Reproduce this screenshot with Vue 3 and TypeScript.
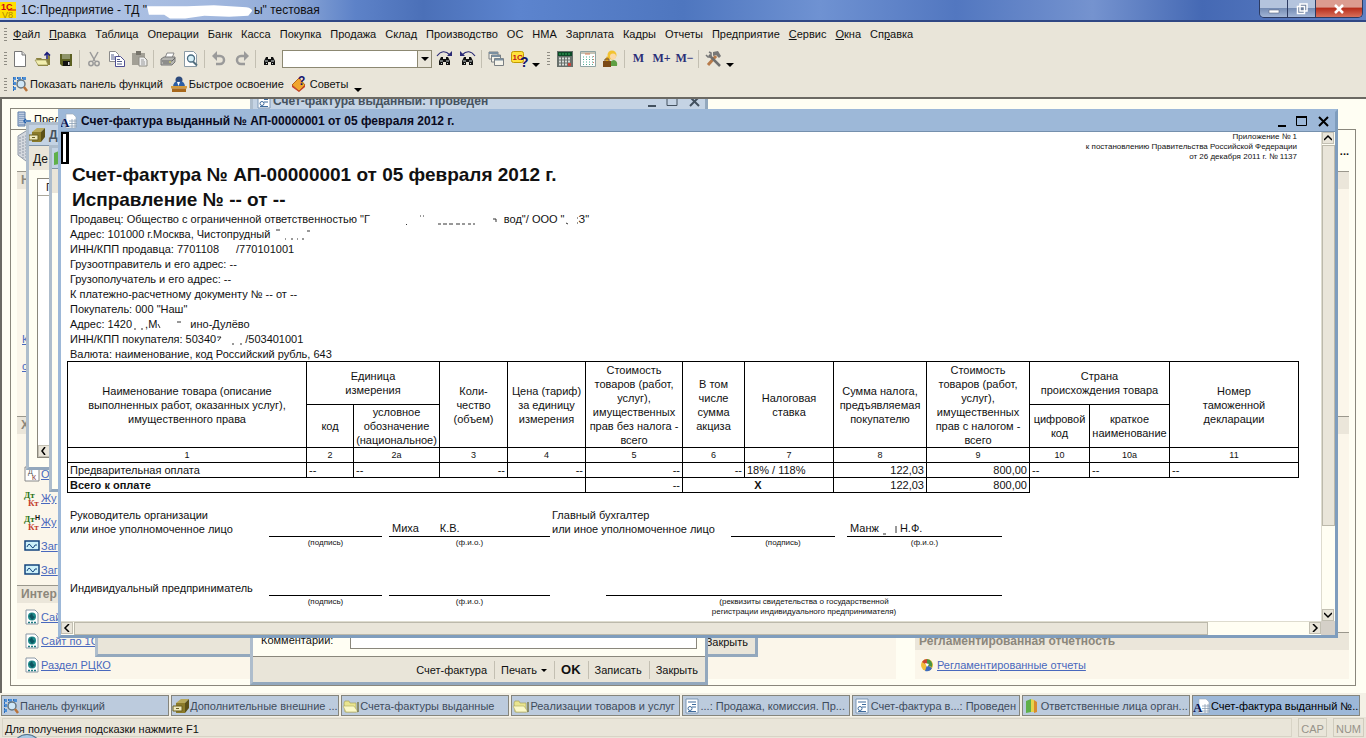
<script setup lang="ts">
import { ref } from 'vue'

const search = ref('')
const comment = ref('')

// Each menu title is split around its underlined access key.
const menu: [string, string, string][] = [
  ['', 'Ф', 'айл'], ['', 'П', 'равка'], ['Таблица', '', ''], ['Операции', '', ''], ['Банк', '', ''],
  ['Касса', '', ''], ['Покупка', '', ''], ['Продажа', '', ''], ['Склад', '', ''], ['Производство', '', ''],
  ['ОС', '', ''], ['НМА', '', ''], ['Зарплата', '', ''], ['Кадры', '', ''], ['Отчеты', '', ''],
  ['Предприятие', '', ''], ['', 'С', 'ервис'], ['', 'О', 'кна'], ['Сп', 'р', 'авка'],
]

const binoculars = '<path d="M2 14V10l2-4h2v2h3V6h2l2 4v4H9v-3H6v3z" fill="#111"/><path d="M3 10h3M9 10h3M4 12.500h1M10 12.500h1" stroke="#cfd8d8"/>'
const formIcon = '<path d="M2 1h12v14H2z" fill="#fff" stroke="#7d97b5"/><path d="M4 4h8M8 6.500h4M8 9h4" stroke="#3e6b9c"/><circle cx="6" cy="10.500" r="2" fill="none" stroke="#3e6b9c"/><path d="M4 13.500h8" stroke="#3e6b9c"/>'
const sheetA = '<path d="M5 1h7l3 3v11H5z" fill="#fff" stroke="#9aa7b5" stroke-width=".6"/><path d="M8 8h8M8 10.500h8M8 13h8M11 6v9M14 6v9" stroke="#8ba0b4" stroke-width=".8"/><text x="-1" y="14" font-family="Liberation Serif" font-weight="700" font-size="13" fill="#0a1350">A</text>'
const folder = '<path d="M1 5l1-2h4l1 2h6v9H2z" fill="#e9e58f" stroke="#a9a35a" stroke-width=".7"/><path d="M0 8h11l4 6H3z" fill="#fbf9c8" stroke="#b8b268" stroke-width=".7"/><path d="M15 4v10" stroke="#77774a" stroke-width="1.500"/>'
const cabinet = '<path d="M3 5l5-4h8l-4 4z" fill="#b8a95a"/><path d="M3 5h9v10H3z" fill="#8b7b2a"/><path d="M12 5l4-4v9l-4 5z" fill="#5c5118"/><path d="M0 8h9v5H0z" fill="#efe9bd" stroke="#6b6020"/><path d="M3 10.500h3" stroke="#6b6020"/>'
const lens = '<path d="M1 1h3v3H1zM6 1h3v3H6zM11 1h3v3h-3zM1 6h3v3H1zM1 11h3v3H1z" fill="#4d8fd6"/><path d="M1.500 1v14M5.500 1v4M10.500 1v3" stroke="#2d6cb8" stroke-dasharray="2 1"/><circle cx="9" cy="8" r="4" fill="#cfe7f7" stroke="#66757f" stroke-width="1.500"/><path d="M12 11l3 4" stroke="#b9733a" stroke-width="2.500"/>'
const page = '<path d="M2 1h9l3 3v11H2z" fill="#fff" stroke="#8a98a5"/><circle cx="8" cy="7.500" r="4" fill="#1f8a8a"/><path d="M5 7l3-3 1 3 2 1-3 3z" fill="#0c5560"/><path d="M4 13.500h8" stroke="#1f7a80" stroke-dasharray="2 1" stroke-width="1.500"/>'
const icons: Record<string, string> = {
  logo: '<path d="M0 0h16v16H0z" fill="#ffdf00"/><text x="1" y="8" font-family="Liberation Sans" font-weight="700" font-size="9" fill="#d00018">1С</text><path d="M8 8h8" stroke="#d00018"/><text x="2" y="16" font-family="Liberation Sans" font-size="9" fill="#b08a00">V8</text>',
  blank: '<path d="M2.500 .5h7.500l3.500 3.500v11.500h-11z" fill="#fff" stroke="#777"/><path d="M10 .5V4h3.500" fill="#ddd" stroke="#777"/>',
  open: '<path d="M1 7h5l1 1h6v7H3z" fill="#8b823f"/><path d="M0 9h11l2 5H3z" fill="#f2eeaf" stroke="#978f50" stroke-width=".7"/><path d="M14 14V4" stroke="#8a823e" stroke-width="2"/><path d="M12 8V2M9.500 4.500L12 1.500l3 3" fill="none" stroke="#17197a" stroke-width="1.500"/>',
  save: '<path d="M2 3h12v12H4l-2-2z" fill="#5c6022"/><path d="M4 3h8v5H4z" fill="#8f946a"/><path d="M5 10h7v5H5z" fill="#111"/><path d="M10 11h1.500v3H10z" fill="#ddd"/>',
  cut: '<g fill="none" stroke="#9a9a9a" stroke-width="1.500"><path d="M4 1l5 9M12 1L7 10"/><circle cx="5" cy="12.500" r="2.200"/><circle cx="11" cy="12.500" r="2.200"/></g>',
  copy: '<g fill="#fff"><path d="M.5 .5h6l3 3v7h-9z" stroke="#8a8a8a"/><path d="M6.500 5.500h5l4 4v6h-9z" stroke="#4d4d92"/></g><path d="M2 4h3M2 6h4M2 8h4M8 8.500h3M8 10.500h5M8 13h5" stroke="#555f8c"/>',
  paste: '<path d="M0 2h13v12H0z" fill="#a3a096"/><path d="M4 0h5v4H4z" fill="#77746b"/><path d="M7 6h5l3 3v6H7z" fill="#eee" stroke="#8e8c84"/><path d="M9 9h3M9 11h4M9 13h4" stroke="#999"/>',
  print: '<path d="M5 7l2-5h7l-2 5z" fill="#fff" stroke="#888"/><path d="M1 8l3-2h11v5l-3 3H1z" fill="#b4b4b0" stroke="#777"/><path d="M2 10h10l3-3M3 12h8" stroke="#666" fill="none"/><path d="M9 11h2" stroke="#e0e060"/>',
  preview: '<path d="M1.500 .5h9l3 3v12h-12z" fill="#fff" stroke="#8a9aa5"/><circle cx="8" cy="7.500" r="3.500" fill="#d7f0f8" stroke="#4a6b80" stroke-width="1.300"/><path d="M10 10.500l4 4" stroke="#54707f" stroke-width="2"/>',
  undo: '<path d="M4 5h5a4 4 0 010 8H5" fill="none" stroke="#9a9a9a" stroke-width="2.500"/><path d="M1 5l5-5v10z" fill="#9a9a9a"/>',
  redo: '<path d="M12 5H7a4 4 0 000 8h4" fill="none" stroke="#9a9a9a" stroke-width="2.500"/><path d="M15 5l-5-5v10z" fill="#9a9a9a"/>',
  find: binoculars,
  next: binoculars + '<path d="M0 5q6-8 13-1" fill="none" stroke="#2b2b75" stroke-width="1.200"/><path d="M15 0v5h-5z" fill="#2b2b75"/>',
  prev: binoculars + '<path d="M15 5Q9-3 2 4" fill="none" stroke="#2b2b75" stroke-width="1.200"/><path d="M0 0v5h5z" fill="#2b2b75"/>',
  windows: '<g fill="#f5f3ea" stroke="#7a7f83"><path d="M1 1h9v7H1z"/><path d="M3.500 4h9v7h-9z"/><path d="M6.500 7.500h9v7h-9z"/></g><path d="M1 2h9M4 5h8M7 8.500h8" stroke="#7a8fa0" stroke-width="2"/>',
  help: '<rect x=".5" y=".5" width="12" height="11" rx="2" fill="#ffe23c" stroke="#c29a00"/><text x="1.500" y="9" font-family="Liberation Sans" font-weight="700" font-size="8" fill="#c2151b">1С</text><text x="9" y="16" font-family="Liberation Sans" font-weight="700" font-size="14" fill="#11136b">?</text>',
  calc: '<path d="M0 0h16v16H0z" fill="#676f6b"/><path d="M1 1h14v4H1z" fill="#0c4a28"/><path d="M2 3h12" stroke="#38b060" stroke-dasharray="2 1"/><path d="M2 7.500h12M2 10.500h12M2 13.500h12" stroke="#d7dcd8" stroke-width="2" stroke-dasharray="2 1"/><path d="M11 12h3v3h-3z" fill="#c7463d"/>',
  calendar: '<path d="M.5 .5h15v15H.5z" fill="#fff" stroke="#8fa3a3"/><path d="M1 2h14" stroke="#c6c2b4" stroke-width="2"/><path d="M5 3h5" stroke="#d77a50"/><path d="M3 6h11M3 8.500h11M3 11h11M3 13.500h11" stroke="#4fae93" stroke-dasharray="1 2"/><path d="M13.500 5v9" stroke="#e37a6a" stroke-dasharray="1 2"/>',
  person: '<circle cx="9" cy="4" r="4.500" fill="#f2c230"/><circle cx="10" cy="5.500" r="3" fill="#fbd9a8"/><path d="M6 15q1-6 5-6 4 1 3 6z" fill="#5fa044"/><path d="M5 6q-2 3 0 5" fill="none" stroke="#e0a820" stroke-width="2.500"/><path d="M0 10h8v6H0z" fill="#7b4a16"/><path d="M2 10V8h4v2" fill="none" stroke="#7b4a16"/>',
  tools: '<path d="M3 14L11 5" stroke="#b77a4a" stroke-width="3"/><path d="M8 1l5-1 3 5-2 2-3-3-3 1z" fill="#777"/><path d="M4 4l11 11" stroke="#6f6f6f" stroke-width="2.500"/><path d="M1 4l2 2h3V2L4 1" fill="none" stroke="#777" stroke-width="1.600"/>',
  lens,
  master: '<circle cx="8" cy="4" r="3.500" fill="#2d4a7c"/><path d="M2 11q0-6 6-6t6 6z" fill="#2c5fa5"/><path d="M6 6h3l-1.500 4z" fill="#fff"/><path d="M0 10h16v2.500H0z" fill="#d39a3c"/><path d="M1 12.500h14V16H1z" fill="#a8681c"/>',
  tips: '<path d="M0 9l7-7 6 7-6 6z" fill="#f0a52c" stroke="#b5651a"/><path d="M0 9l7 6 6-6v2l-6 5-7-5z" fill="#c83c28"/><text x="6" y="9" font-family="Liberation Sans" font-weight="700" font-size="12" fill="#14146e">?</text>',
  form: formIcon, sheetA, folder, cabinet, page,
  book: '<path d="M2 3l5-2v13l-5 1z" fill="#5fb04a"/><path d="M7 1l3 1v12l-3 0z" fill="#e7d34a"/><path d="M10 2l3 2v10l-3 1z" fill="#d98b2f"/>',
  building: '<path d="M1 1h7v14H1z" fill="#bccbe0" stroke="#5c7ca8"/><path d="M3 3v11M5 3v11M7 3v11" stroke="#5c7ca8" stroke-dasharray="1 1"/><path d="M9 10h5M9 8l-2 2 2 2" stroke="#1f5fae" stroke-width="1.500" fill="none"/>',
  accounts: '<path d="M1 1h14v14H1z" fill="#fff" stroke="#888"/><text x="4" y="8" font-size="7" fill="#555">Д</text><text x="8" y="14" font-size="7" fill="#833">К</text>',
  wave: '<path d="M1 3h14v9H1z" fill="#cdf1fa" stroke="#14447e" stroke-width="1.500"/><path d="M3 9q2-5 4-1t4-1l2 0" fill="none" stroke="#14447e"/>',
  dtkt: '<text x="0" y="8" font-family="Liberation Serif" font-weight="700" font-size="9" fill="#2c7416">Дт</text><text x="4" y="16" font-family="Liberation Serif" font-weight="700" font-size="9" fill="#c4402e">Кт</text>',
  dtktn: '<text x="0" y="8" font-family="Liberation Serif" font-weight="700" font-size="9" fill="#2c7416">Дт</text><text x="11" y="6" font-family="Liberation Sans" font-weight="700" font-size="7" fill="#111">Н</text><text x="4" y="16" font-family="Liberation Serif" font-weight="700" font-size="9" fill="#c4402e">Кт</text>',
  pie: '<circle cx="8" cy="8" r="6" fill="#f0bd3a"/><path d="M8 8V2a6 6 0 015 8z" fill="#4a9440"/><path d="M8 8L3 5a6 6 0 015-3z" fill="#c8442f"/><path d="M8 8l5 3a6 6 0 01-7 3z" fill="#3d6cc0"/><path d="M6 6l4 1-2 3z" fill="#fff"/>',
}

type Tool = { icon?: string; text?: string; sep?: boolean; label?: string }
const sep: Tool = { sep: true }
const fileTools: Tool[] = [
  { icon: 'blank', label: 'Новый' }, { icon: 'open', label: 'Открыть' }, { icon: 'save', label: 'Сохранить' }, sep,
  { icon: 'cut', label: 'Вырезать' }, { icon: 'copy', label: 'Копировать' }, { icon: 'paste', label: 'Вставить' }, sep,
  { icon: 'print', label: 'Печать' }, { icon: 'preview', label: 'Просмотр' }, sep,
  { icon: 'undo', label: 'Отменить' }, { icon: 'redo', label: 'Вернуть' }, sep, { icon: 'find', label: 'Найти' },
]
const searchTools: Tool[] = [
  { icon: 'next', label: 'Найти далее' }, { icon: 'prev', label: 'Найти назад' }, sep,
  { icon: 'windows', label: 'Окна' }, { icon: 'help', label: 'Помощь' },
]
const calcTools: Tool[] = [
  { icon: 'calc', label: 'Калькулятор' }, { icon: 'calendar', label: 'Календарь' }, { icon: 'person', label: 'Пользователь' }, sep,
  { text: 'M' }, { text: 'M+' }, { text: 'M−' }, sep, { icon: 'tools', label: 'Настройка' },
]

const columns = [239, 47, 86, 68, 78, 97, 62, 89, 93, 103, 60, 80, 129]
const numbers = ['1', '2', '2а', '3', '4', '5', '6', '7', '8', '9', '10', '10а', '11']
const payment = ['Предварительная оплата', '--', '--', '--', '--', '--', '--', '18% / 118%', '122,03', '800,00', '--', '--', '--']
const rightAligned = [3, 4, 5, 6, 8, 9]

const links = [
  { icon: 'accounts', text: 'О' }, { icon: 'dtkt', text: 'Жу' }, { icon: 'dtktn', text: 'Жу' },
  { icon: 'wave', text: 'Заг' }, { icon: 'wave', text: 'Заг' },
]
const sites = ['Сай', 'Сайт по 1С', 'Раздел РЦКО']

const tasks = [
  { icon: 'lens', text: 'Панель функций' }, { icon: 'cabinet', text: 'Дополнительные внешние ...' },
  { icon: 'folder', text: 'Счета-фактуры выданные' }, { icon: 'folder', text: 'Реализации товаров и услуг' },
  { icon: 'form', text: '...: Продажа, комиссия. Пр...' }, { icon: 'form', text: 'Счет-фактура в...: Проведен' },
  { icon: 'book', text: 'Ответственные лица орган...' }, { icon: 'sheetA', text: 'Счет-фактура выданный №...' },
]
</script>

<template>
  <div class="app">
    <header class="caption">
      <svg class="ico" viewBox="0 0 16 16" v-html="icons.logo" />
      <h1>1С:Предприятие - ТД "<span class="blot"><svg viewBox="0 0 112 18"><path d="M0 5h42l28-1 34 2q6 1 6 4l-4 5-20 1-26-1-20 3-16 0-6-4H2z" fill="#fff" /></svg></span>ы" тестовая</h1>
      <div class="sysbuttons">
        <button aria-label="Свернуть"><svg viewBox="0 0 16 12"><path d="M3 7h10v3H3z" fill="#fff" stroke="#5a6a85" stroke-width=".6" /></svg></button>
        <button aria-label="Восстановить"><svg viewBox="0 0 16 12"><path d="M6 1h7v7h-7zM3.500 3.500h7v7h-7z" fill="#6c7f9c" stroke="#fff" stroke-width="1.500" /></svg></button>
        <button class="red" aria-label="Закрыть"><svg viewBox="0 0 16 12"><path d="M4 2l8 8M12 2l-8 8" stroke="#fff" stroke-width="2.500" /></svg></button>
      </div>
    </header>

    <nav class="menu">
      <i class="grip" />
      <button v-for="m in menu" :key="m.join('')">{{ m[0] }}<u>{{ m[1] }}</u>{{ m[2] }}</button>
    </nav>

    <div class="tools">
      <i class="grip" />
      <template v-for="(t, i) in fileTools" :key="i">
        <i v-if="t.sep" class="sep" />
        <button v-else class="tool" :aria-label="t.label"><svg class="ico" viewBox="0 0 16 16" v-html="icons[t.icon!]" /></button>
      </template>
      <div class="combo">
        <input v-model="search" type="text" aria-label="Поиск" />
        <button aria-label="Список"><i class="tri" /></button>
      </div>
      <template v-for="(t, i) in searchTools" :key="i">
        <i v-if="t.sep" class="sep" />
        <button v-else class="tool" :aria-label="t.label"><svg class="ico" viewBox="0 0 16 16" v-html="icons[t.icon!]" /></button>
      </template>
      <button class="more" aria-label="Ещё"><i class="tri" /></button>
      <i class="grip wide" />
      <template v-for="(t, i) in calcTools" :key="i">
        <i v-if="t.sep" class="sep" />
        <button v-else-if="t.text" class="tool mem">{{ t.text }}</button>
        <button v-else class="tool" :aria-label="t.label"><svg class="ico" viewBox="0 0 16 16" v-html="icons[t.icon!]" /></button>
      </template>
      <button class="more" aria-label="Ещё"><i class="tri" /></button>
    </div>

    <div class="tools quick">
      <i class="grip" />
      <button><svg class="ico" viewBox="0 0 16 16" v-html="icons.lens" />Показать панель функций</button>
      <button><svg class="ico" viewBox="0 0 16 16" v-html="icons.master" />Быстрое освоение</button>
      <button><svg class="ico" viewBox="0 0 16 16" v-html="icons.tips" />Советы</button>
      <button class="more" aria-label="Ещё"><i class="tri" /></button>
    </div>

    <main class="desktop">
      <section class="panel">
        <div class="tab"><svg class="ico" viewBox="0 0 16 16" v-html="icons.building" />Пред</div>
        <div class="board">
          <div class="left">
            <div class="figure"><svg viewBox="0 0 24 32"><path d="M2 6l8-5 12 5v20l-12 5-8-6z" fill="#d4d8de" stroke="#8f98a6" /><path d="M4 7v18M7 6v22M10 5v24M13 6v22" stroke="#8f98a6" stroke-dasharray="2 1" /></svg></div>
            <h2>Н</h2>
            <div class="group tall">
              <a href="#">К</a>
              <a href="#">с</a>
            </div>
            <h2>Х</h2>
            <div class="group ops">
              <a v-for="(l, i) in links" :key="i" href="#"><svg class="ico" viewBox="0 0 16 16" v-html="icons[l.icon]" /><span>{{ l.text }}</span></a>
            </div>
            <h2>Интер</h2>
            <div class="group sites">
              <a v-for="s in sites" :key="s" href="#"><svg class="ico" viewBox="0 0 16 16" v-html="icons.page" /><span>{{ s }}</span></a>
            </div>
          </div>
          <div class="right">
            <p class="dots">...</p>
            <h2 />
            <div class="group upper" />
            <h2 />
            <div class="group lower" />
            <h2>Регламентированная отчетность</h2>
            <div class="group last"><a href="#"><svg class="ico" viewBox="0 0 16 16" v-html="icons.pie" /><span>Регламентированные отчеты</span></a></div>
          </div>
        </div>
      </section>

      <section class="win win-ext">
        <h3><svg class="ico" viewBox="0 0 16 16" v-html="icons.cabinet" />Д</h3>
        <div class="bar">Де</div>
        <div class="body"><div class="list"><span>Г</span><b class="arrow"><svg viewBox="0 0 8 8"><path d="M5 0L2 4l3 4" fill="none" stroke="#000" stroke-width="1.500" /></svg></b></div></div>
      </section>

      <section class="win win-list">
        <h3><svg class="ico" viewBox="0 0 16 16" v-html="icons.book" /></h3>
        <div class="bar" />
        <div class="body" />
      </section>

      <section class="win win-sale"><div class="body"><button>Закрыть</button></div></section>

      <section class="win win-invoice">
        <h3><svg class="ico" viewBox="0 0 16 16" v-html="icons.form" /><span>Счет-фактура выданный: Проведен</span>
          <svg class="winctl" viewBox="0 0 56 14"><path d="M2 12h8M44 3l9 9M53 3l-9 9" stroke="#43515f" stroke-width="2" /><path d="M21 2.500h10v9H21z" fill="none" stroke="#43515f" /></svg>
        </h3>
        <div class="body">
          <div class="comment"><label for="comment">Комментарий:</label><input id="comment" v-model="comment" type="text" /></div>
          <div class="actions">
            <button>Счет-фактура</button><i class="sep" /><button>Печать <i class="tri" /></button><i class="sep" /><button class="ok">OK</button><i class="sep" /><button>Записать</button><i class="sep" /><button>Закрыть</button>
          </div>
        </div>
      </section>

      <section class="win win-doc">
        <h3><svg class="ico" viewBox="0 0 16 16" v-html="icons.sheetA" /><span>Счет-фактура выданный № АП-00000001 от 05 февраля 2012 г.</span>
          <svg class="winctl" viewBox="0 0 56 14"><path d="M2 12h8M43 3l9 9M52 3l-9 9" stroke="#000" stroke-width="2" /><path d="M20.500 2.500h10v9h-10z" fill="none" stroke="#000" /><path d="M20 3h11" stroke="#000" stroke-width="2" /></svg>
        </h3>
        <div class="frame">
          <article class="sheet">
            <i class="cursor" />
            <p class="note">Приложение № 1<br>к постановлению Правительства Российской Федерации<br>от 26 декабря 2011 г. № 1137</p>
            <h2>Счет-фактура № АП-00000001 от 05 февраля 2012 г.</h2>
            <h2>Исправление № -- от --</h2>
            <div class="info">
              <p>Продавец: Общество с ограниченной ответственностью "Г<svg class="smudge" width="134" height="12" viewBox="0 0 134 12"><path d="M36 10l1 1M50 2h1M53 2h1M68 10h3M73 10h4M79 10h4M86 10h4M92 10h3M98 10h3M103 10h2M123 5h3v3" stroke="#333" fill="none" /></svg>вод"/ ООО "<svg class="smudge" width="14" height="12" viewBox="0 0 14 12"><path d="M1 9l2 1M12 4h1M12 9h1" stroke="#333" /></svg>З"</p>
              <p>Адрес: 101000 г.Москва, Чистопрудный<svg class="smudge" width="42" height="12" viewBox="0 0 42 12"><path d="M6 1h4M15 10h1M21 10h2M27 10h1M32 10h2M37 2h3" stroke="#333" /></svg></p>
              <p>ИНН/КПП продавца: 7701108<i class="hole narrow" />/770101001</p>
              <p>Грузоотправитель и его адрес: --</p>
              <p>Грузополучатель и его адрес: --</p>
              <p>К платежно-расчетному документу № -- от --</p>
              <p>Покупатель: 000 "Наш"</p>
              <p>Адрес: 1420<svg class="smudge" width="13" height="12" viewBox="0 0 13 12"><path d="M2 10h2M9 10h2" stroke="#333" /></svg>,М<svg class="smudge" width="33" height="12" viewBox="0 0 33 12"><path d="M1 5l2 4M20 3h4" stroke="#333" /></svg>ино-Дулёво</p>
              <p>ИНН/КПП покупателя: 50340<svg class="smudge" width="29" height="12" viewBox="0 0 29 12"><path d="M1 3h4l-3 4M16 10h2M24 10h2" stroke="#333" fill="none" /></svg>/503401001</p>
              <p>Валюта: наименование, код Российский рубль, 643</p>
            </div>
            <table>
              <colgroup><col v-for="(w, i) in columns" :key="i" :style="{ width: w + 'px' }"></colgroup>
              <thead>
                <tr>
                  <th rowspan="2">Наименование товара (описание<br>выполненных работ, оказанных услуг),<br>имущественного права</th>
                  <th colspan="2">Единица<br>измерения</th>
                  <th rowspan="2">Коли-<br>чество<br>(объем)</th>
                  <th rowspan="2">Цена (тариф)<br>за единицу<br>измерения</th>
                  <th rowspan="2">Стоимость<br>товаров (работ,<br>услуг),<br>имущественных<br>прав без налога -<br>всего</th>
                  <th rowspan="2">В том<br>числе<br>сумма<br>акциза</th>
                  <th rowspan="2">Налоговая<br>ставка</th>
                  <th rowspan="2">Сумма налога,<br>предъявляемая<br>покупателю</th>
                  <th rowspan="2">Стоимость<br>товаров (работ,<br>услуг),<br>имущественных<br>прав с налогом -<br>всего</th>
                  <th colspan="2">Страна<br>происхождения товара</th>
                  <th rowspan="2">Номер<br>таможенной<br>декларации</th>
                </tr>
                <tr>
                  <th>код</th>
                  <th>условное<br>обозначение<br>(национальное)</th>
                  <th>цифровой<br>код</th>
                  <th>краткое<br>наименование</th>
                </tr>
                <tr class="nums"><th v-for="n in numbers" :key="n">{{ n }}</th></tr>
              </thead>
              <tbody>
                <tr><td v-for="(c, i) in payment" :key="i" :class="{ num: rightAligned.includes(i) }">{{ c }}</td></tr>
                <tr>
                  <td colspan="5"><b>Всего к оплате</b></td><td class="num">--</td><td colspan="2" class="mid"><b>Х</b></td>
                  <td class="num">122,03</td><td class="num">800,00</td><td colspan="3" class="none" />
                </tr>
              </tbody>
            </table>
            <div class="signs">
              <p>Руководитель организации<br>или иное уполномоченное лицо</p>
              <div class="line">&nbsp;</div>
              <div class="line">Миха<i class="hole" />К.В.</div>
              <p>Главный бухгалтер<br>или иное уполномоченное лицо</p>
              <div class="line">&nbsp;</div>
              <div class="line">Манж<svg class="smudge" width="18" height="12" viewBox="0 0 18 12"><path d="M4 11h3M17 3v7" stroke="#333" /></svg> Н.Ф.</div>
              <small class="c2">(подпись)</small><small class="c3">(ф.и.о.)</small><small class="c5">(подпись)</small><small class="c6">(ф.и.о.)</small>
            </div>
            <div class="signs solo">
              <p>Индивидуальный предприниматель</p>
              <div class="line">&nbsp;</div>
              <div class="line">&nbsp;</div>
              <div class="line long">&nbsp;</div>
              <small class="c2">(подпись)</small><small class="c3">(ф.и.о.)</small><small class="c4">(реквизиты свидетельства о государственной<br>регистрации индивидуального предпринимателя)</small>
            </div>
          </article>
          <div class="vbar">
            <b class="arrow"><svg viewBox="0 0 8 8"><path d="M0 6l4-4 4 4" fill="none" stroke="#000" stroke-width="1.500" /></svg></b>
            <i class="thumb" />
            <b class="arrow"><svg viewBox="0 0 8 8"><path d="M0 2l4 4 4-4" fill="none" stroke="#000" stroke-width="1.500" /></svg></b>
          </div>
          <div class="hbar">
            <b class="arrow"><svg viewBox="0 0 8 8"><path d="M6 0L2 4l4 4" fill="none" stroke="#000" stroke-width="1.500" /></svg></b>
            <i class="thumb" />
            <b class="arrow"><svg viewBox="0 0 8 8"><path d="M2 0l4 4-4 4" fill="none" stroke="#000" stroke-width="1.500" /></svg></b>
          </div>
          <i class="corner" />
        </div>
      </section>
    </main>

    <nav class="tasks">
      <button v-for="(t, i) in tasks" :key="t.text" :class="{ on: i === 7 }"><svg class="ico" viewBox="0 0 16 16" v-html="icons[t.icon]" /><span>{{ t.text }}</span></button>
    </nav>
    <footer class="status">
      <p>Для получения подсказки нажмите F1</p><span>CAP</span><span>NUM</span>
      <i class="orb" />
    </footer>
  </div>
</template>

<style>
body { margin: 0; }
</style>

<style scoped>
* { box-sizing: border-box; }
.app { display: flex; flex-direction: column; height: 100vh; min-height: 600px; overflow: hidden; background: #e9e5d9; font: 11px/14px "Liberation Sans", Arial, sans-serif; color: #111; }
h1, h2, h3, p { margin: 0; font: inherit; }
button { padding: 0; border: 0; background: none; font: inherit; color: inherit; white-space: nowrap; }
input { min-width: 0; padding: 0 2px; border: 0; outline: 0; background: #fff; font: inherit; }
i { font-style: normal; flex: none; }
.ico { width: 16px; height: 16px; flex: none; overflow: visible; }
.tri { display: inline-block; border: 4px solid transparent; border-top-color: #000; border-bottom: 0; }

.caption { display: flex; align-items: center; gap: 5px; height: 22px; flex: none; border-bottom: 2px solid #2f4784; background: linear-gradient(90deg, #b9cbe8 0, #a3b9df 15%, #91abd8 21%, #5d82c8 26%, #4b70b8 31%, #5c84ce 38%, #4e76bf 50%, #6f92d2 60%, #5277c0 70%, #7593cf 80%, #4569b4 88%, #5f80c4 100%); }
.caption h1 { flex: 1; display: flex; white-space: pre; font-size: 12px; }
.blot { display: inline-flex; width: 107px; }
.blot svg { width: 112px; height: 18px; margin: -2px 0; }
.sysbuttons { display: flex; align-self: flex-start; height: 18px; margin-right: 3px; border: 1px solid #2c3b62; border-top: 0; border-radius: 0 0 5px 5px; overflow: hidden; }
.sysbuttons button { width: 28px; display: flex; justify-content: center; align-items: center; border-right: 1px solid #2c3b62; background: linear-gradient(#b4c4dd 45%, #768db4 50%, #a2b5d6); }
.sysbuttons svg { width: 16px; height: 12px; }
.sysbuttons .red { width: 46px; border: 0; background: linear-gradient(#dc9c90 40%, #b8301e 50%, #d8705c); }

.menu { display: flex; align-items: center; height: 24px; flex: none; gap: 9px; }
.grip { width: 3px; height: 13px; margin: 0 1px 0 4px; background: repeating-linear-gradient(#8f8c83 0 1px, transparent 1px 3px); }
.menu .grip { margin-right: -3px; }
.wide { margin: 0 3px 0 5px; }
.tools { display: flex; align-items: center; height: 25px; flex: none; }
.tool { width: 23px; height: 23px; display: flex; align-items: center; justify-content: center; flex: none; }
.mem { font: bold 12px "Liberation Serif", serif; color: #2b2f78; }
.sep { width: 1px; height: 18px; margin: 0 2px; background: #c3bfb2; }
.combo { display: flex; width: 150px; height: 18px; margin: 0 1px; border: 1px solid #8c8872; background: #fff; }
.combo input { flex: 1; }
.combo button { width: 14px; background: #e9e5d9; border-left: 1px solid #8c8872; display: flex; align-items: center; justify-content: center; }
.more { width: 12px; height: 16px; display: flex; align-items: flex-end; justify-content: center; }
.quick { height: 26px; }
.quick button:not(.more) { display: flex; align-items: center; gap: 2px; margin: 0 4px; }

.desktop { flex: 1; min-height: 0; position: relative; overflow: hidden; background: #fffef3; border-top: 2px solid #6b6963; border-left: 2px solid #6b6963; }
.panel { position: absolute; inset: 9px 10px 7px 8px; display: flex; flex-direction: column; }
.tab { width: 120px; height: 21px; flex: none; display: flex; align-items: center; padding-left: 6px; gap: 1px; border: 1px solid #8a877c; border-bottom: 0; }
.board { flex: 1; min-height: 0; overflow: hidden; display: flex; justify-content: space-between; padding: 0 6px; border: 1px solid #8a877c; }
.board h2 { height: 18px; padding-left: 4px; border-top: 1px solid #9a978c; background: #ebe6da; color: #8b877c; font-weight: bold; font-size: 12px; line-height: 17px; }
.left { width: 66%; }
.right { width: 434px; }
.figure { height: 41px; margin-left: -1px; }
.figure svg { width: 24px; height: 32px; }
.group { background: #fbf6ea; }
.group a { display: flex; align-items: center; gap: 1px; color: #4968bd; text-decoration: underline; }
.tall { height: 227px; padding-top: 136px; }
.tall a { height: 27px; padding-left: 5px; }
.ops { height: 151px; padding: 28px 0 0 7px; }
.ops a, .sites a { height: 24px; }
.sites { height: 76px; padding: 2px 0 0 7px; }
.dots { height: 41px; padding-top: 14px; text-align: right; font-weight: bold; }
.upper { height: 227px; }
.lower { height: 198px; }
.last { height: 29px; padding: 7px 0 0 4px; }
.last a { gap: 2px; }

.win { position: absolute; display: flex; flex-direction: column; border: 3px solid #aebdcc; border-right-color: #93a8bd; border-bottom-color: #93a8bd; background: #fffef3; }
.win h3 { display: flex; align-items: center; gap: 4px; height: 20px; flex: none; background: #c4d3e4; color: #46525e; font-weight: bold; font-size: 12px; white-space: nowrap; overflow: hidden; }
.win .body { flex: 1; min-height: 0; }
.winctl { width: 56px; height: 14px; margin: 0 3px 0 auto; flex: none; }
.bar { height: 25px; flex: none; padding: 6px 4px; background: #e9e5d9; border-top: 1px solid #8094a8; font-size: 12px; overflow: hidden; }
.win-ext { left: 24px; top: 23px; bottom: 223px; width: 300px; }
.win-ext .body { padding: 8px 8px 9px; }
.list { height: 100%; display: flex; flex-direction: column; justify-content: space-between; border: 1px solid #8a877c; background: #fff; }
.list span { padding: 1px 8px; border-bottom: 1px solid #aaa79c; }
.win-list { left: 47px; top: 46px; bottom: 201px; width: 300px; }
.win-sale { left: 93px; bottom: 36px; width: 663px; height: 200px; }
.win-sale .body { display: flex; justify-content: flex-end; align-items: flex-end; padding: 0 7px 5px; background: #e9e5d9; }
.win-invoice { left: 248px; top: -11px; bottom: 8px; width: 458px; }
.win-invoice .body { display: flex; flex-direction: column; justify-content: flex-end; }
.win-invoice h3 { padding-left: 3px; gap: 1px; }
.comment { display: flex; align-items: center; padding: 0 8px 7px; }
.comment label { width: 89px; }
.comment input { flex: 1; height: 19px; border: 1px solid #8a877c; }
.actions { display: flex; align-items: center; justify-content: flex-end; height: 26px; padding-right: 2px; border-top: 1px solid #8a877c; background: #e9e5d9; }
.actions button { padding: 0 5px 0 4px; }
.actions .tri { border-width: 3px 3px 0; margin-left: 1px; vertical-align: middle; }
.actions .ok { font-weight: bold; font-size: 13px; }

.win-doc { left: 56px; right: 28px; top: 10px; bottom: 55px; border-color: #9db8d8 #7f9dbd #7f9dbd #9db8d8; background: #fff; }
.win-doc h3 { height: 20px; background: #9db8d8; color: #0a0a20; border-bottom: 1px solid #7590ad; padding-bottom: 2px; }
.frame { flex: 1; min-height: 0; display: grid; grid-template-columns: 1fr 14px; grid-template-rows: 1fr 14px; }
.sheet { position: relative; overflow: hidden; padding: 0 22px 0 6px; background: #fff; }
.cursor { position: absolute; left: 0; top: 0; width: 8px; height: 32px; border: 2px solid #000; border-right-width: 3px; }
.note { padding-right: 2px; text-align: right; font-size: 8px; line-height: 10px; }
.sheet h2 { height: 25px; padding-left: 5px; font: bold 19px/25px "Liberation Sans", Arial, sans-serif; }
.info { padding-left: 3px; }
.info p { height: 15px; line-height: 15px; white-space: nowrap; }
.smudge { vertical-align: middle; }
.hole { display: inline-block; width: 21px; }
.narrow { width: 17px; }
.sheet table { width: 100%; margin-top: -1px; table-layout: fixed; border-collapse: collapse; }
.sheet th, .sheet td { height: 15px; padding: 0 1px; border: 1px solid #000; font-weight: normal; line-height: 14px; white-space: nowrap; overflow: hidden; }
.sheet th { height: 43px; padding: 0; }
.sheet .nums th { height: 15px; font-size: 9px; }
.sheet td { padding: 0 2px; }
.sheet .num { text-align: right; }
.sheet .mid { text-align: center; }
.sheet .none { border: 0; }
.signs { display: grid; grid-template-columns: 199px 113px 7px 161px 2px 179px 104px 12px 155px; grid-template-rows: 29px auto; padding: 15px 0 0 3px; }
.signs p { white-space: nowrap; }
.signs .line { align-self: end; height: 15px; padding-left: 3px; border-bottom: 1px solid #000; white-space: nowrap; line-height: 13px; }
.signs small { padding-top: 1px; font-size: 8px; line-height: 10px; text-align: center; }
.signs > :nth-child(1) { grid-area: 1 / 1; }
.signs > :nth-child(2) { grid-area: 1 / 2; }
.signs > :nth-child(3) { grid-area: 1 / 4; }
.signs > :nth-child(4) { grid-area: 1 / 6; }
.signs > :nth-child(5) { grid-area: 1 / 7; }
.signs > :nth-child(6) { grid-area: 1 / 9; }
.signs > .c2 { grid-area: 2 / 2; }
.signs > .c3 { grid-area: 2 / 4; }
.signs > .c5 { grid-area: 2 / 7; }
.signs > .c6 { grid-area: 2 / 9; }
.solo { padding-top: 33px; grid-template-rows: 15px auto; }
.signs > .long { grid-area: 1 / 6 / 2 / 10; margin-left: 54px; }
.signs > .c4 { grid-area: 2 / 6 / 3 / 10; margin-left: 54px; }
.vbar { display: flex; flex-direction: column; gap: 1px; border-left: 1px solid #dedccf; background: #fffef3; }
.hbar { display: flex; gap: 1px; border-top: 1px solid #dedccf; background: #fffef3; }
.arrow { width: 12px; height: 12px; flex: none; display: flex; align-items: center; justify-content: center; border: 1px solid #c2bfb2; background: #e9e5d9; }
.arrow svg { width: 8px; height: 8px; }
.thumb { border: 1px solid #bcb9ab; background: #e9e5d9; flex: 0 1 auto; }
.vbar .thumb { height: 78%; margin-bottom: auto; }
.hbar .thumb { width: 90%; margin-right: auto; }
.corner { background: #d5d0c8; }

.tasks { display: flex; gap: 2px; height: 24px; flex: none; padding: 2px 6px 1px 1px; background: #f4f1e6; }
.tasks button { flex: 1; min-width: 0; display: flex; align-items: center; gap: 1px; padding-left: 1px; border: 1px solid #85857c; background: #bccbdd; color: #3f4c5c; overflow: hidden; }
.tasks .on { background: #9db8d8; color: #000; }
.status { position: relative; display: flex; align-items: center; gap: 6px; height: 21px; flex: none; padding: 0 2px; overflow: hidden; }
.status p { flex: 1; height: 19px; padding: 3px 2px 0; border: 1px solid #d8d4c6; }
.status span { height: 19px; padding: 3px 2px 0; border: 1px solid #d0ccbe; color: #97938a; }
.orb { position: absolute; left: 13px; bottom: -22px; width: 28px; height: 26px; border-radius: 50%; border: 1px solid #4f6f8a; background: #a8c8e4; }
</style>
